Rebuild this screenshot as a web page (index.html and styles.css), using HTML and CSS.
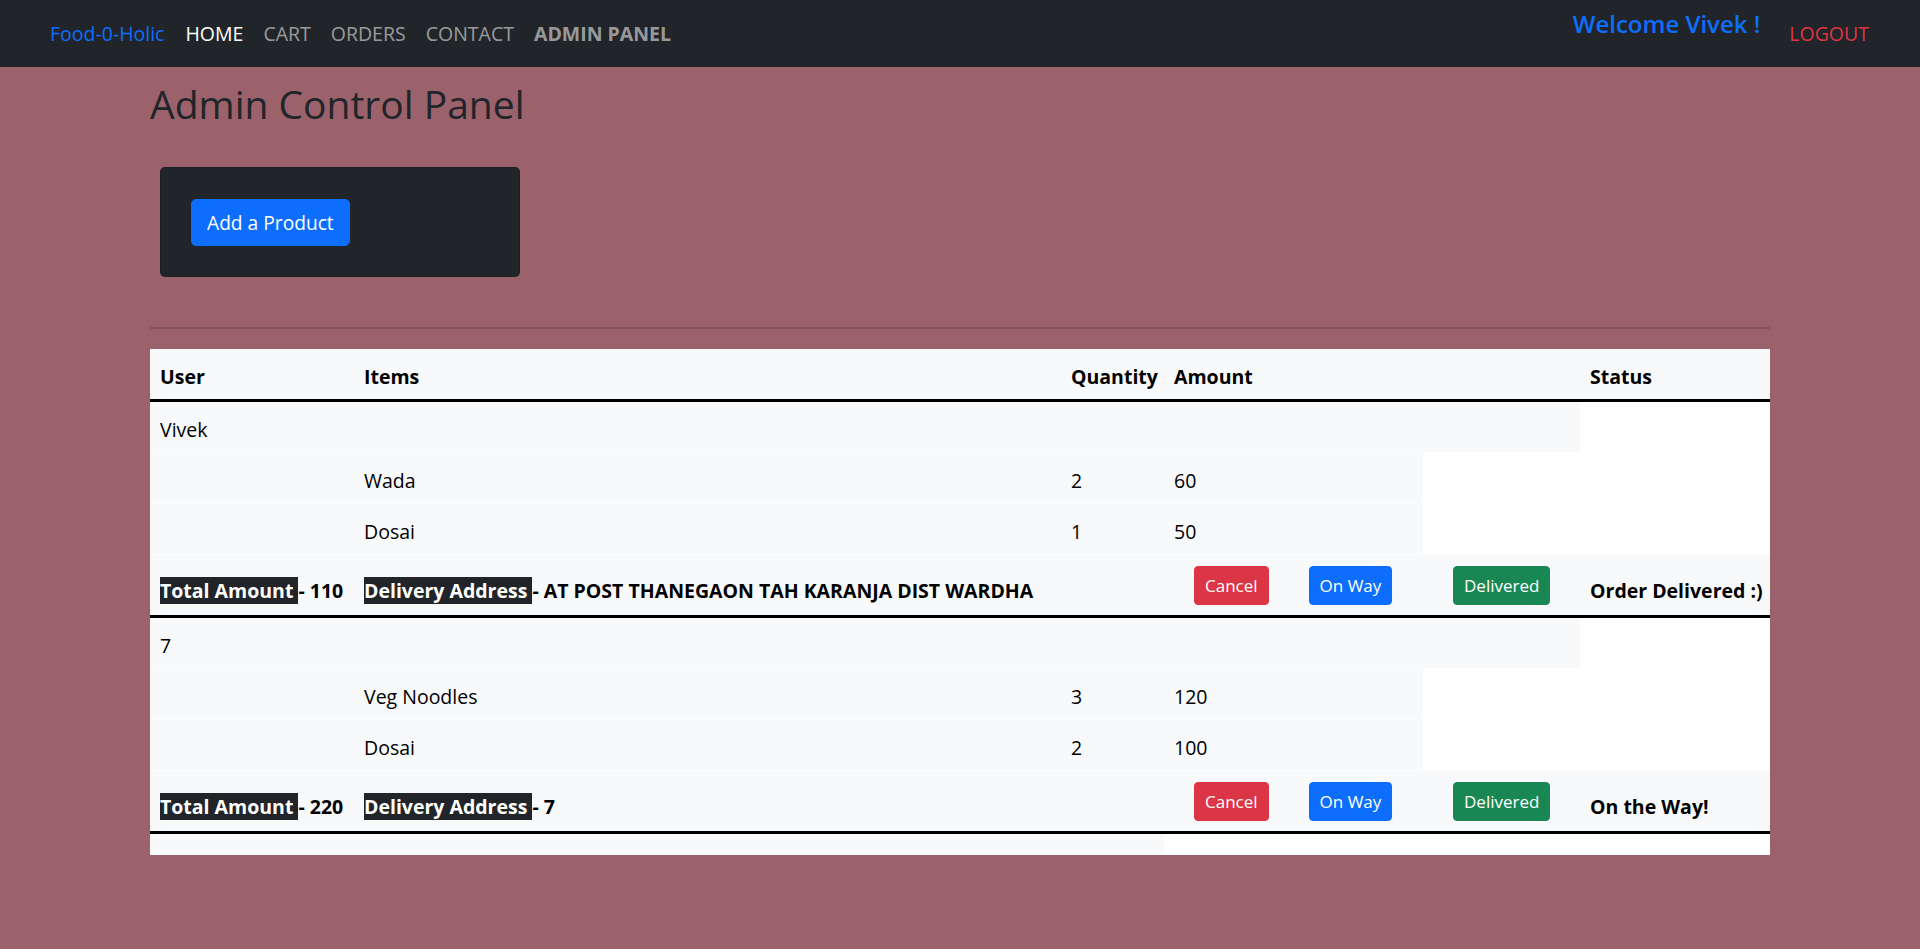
FILE: index.html
```html
<!DOCTYPE html>
<html lang="en">
  <head>
    <meta charset="UTF-8" />
    <meta name="viewport" content="width=device-width, initial-scale=1.0" />
    <title>Food-0-Holic | Admin Panel</title>
    <link rel="stylesheet" href="styles.css">
  </head>
  <body>
    <nav class="navbar">
      <a class="brand" href="#">Food-0-Holic</a>
      <ul class="nav-links">
        <li><a class="nav-link active" href="#">HOME</a></li>
        <li><a class="nav-link" href="#">CART</a></li>
        <li><a class="nav-link" href="#">ORDERS</a></li>
        <li><a class="nav-link" href="#">CONTACT</a></li>
        <li><a class="nav-link admin" href="#">ADMIN PANEL</a></li>
      </ul>
      <div class="nav-user">
        <h5 class="welcome">Welcome Vivek !</h5>
        <a class="logout" href="#">LOGOUT</a>
      </div>
    </nav>

    <main class="page">
      <div class="container">
        <h2 class="title">Admin Control Panel</h2>

        <div class="control-box">
          <button type="button" class="btn btn-primary btn-add">Add a Product</button>
        </div>

        <hr class="divider" />

        <table class="orders">
          <colgroup>
            <col class="col-user" />
            <col class="col-items" />
            <col class="col-qty" />
            <col class="col-amount" />
            <col class="col-extra" />
            <col class="col-status" />
          </colgroup>
          <thead>
            <tr>
              <th>User</th>
              <th>Items</th>
              <th>Quantity</th>
              <th>Amount</th>
              <th></th>
              <th>Status</th>
            </tr>
          </thead>
          <tbody>
            <tr>
              <td>Vivek</td>
              <td></td>
              <td></td>
              <td></td>
              <td></td>
            </tr>
            <tr>
              <td></td>
              <td>Wada</td>
              <td>2</td>
              <td>60</td>
            </tr>
            <tr>
              <td></td>
              <td>Dosai</td>
              <td>1</td>
              <td>50</td>
            </tr>
            <tr class="order-total">
              <td class="total-text"><span class="tag">Total Amount </span>- 110</td>
              <td class="total-text"><span class="tag">Delivery Address </span>- AT POST THANEGAON TAH KARANJA DIST WARDHA</td>
              <td></td>
              <td>
                <button type="button" class="btn btn-sm btn-danger">Cancel</button><button type="button" class="btn btn-sm btn-primary">On Way</button>
              </td>
              <td><button type="button" class="btn btn-sm btn-success">Delivered</button></td>
              <td class="total-text">Order Delivered :)</td>
            </tr>
          </tbody>
          <tbody>
            <tr>
              <td>7</td>
              <td></td>
              <td></td>
              <td></td>
              <td></td>
            </tr>
            <tr>
              <td></td>
              <td>Veg Noodles</td>
              <td>3</td>
              <td>120</td>
            </tr>
            <tr>
              <td></td>
              <td>Dosai</td>
              <td>2</td>
              <td>100</td>
            </tr>
            <tr class="order-total">
              <td class="total-text"><span class="tag">Total Amount </span>- 220</td>
              <td class="total-text"><span class="tag">Delivery Address </span>- 7</td>
              <td></td>
              <td>
                <button type="button" class="btn btn-sm btn-danger">Cancel</button><button type="button" class="btn btn-sm btn-primary">On Way</button>
              </td>
              <td><button type="button" class="btn btn-sm btn-success">Delivered</button></td>
              <td class="total-text">On the Way!</td>
            </tr>
          </tbody>
          <tbody>
            <tr class="empty-row">
              <td></td>
              <td></td>
              <td></td>
            </tr>
          </tbody>
        </table>
      </div>
    </main>

    <footer class="site-footer"></footer>
  </body>
</html>
```

FILE: styles.css
```css
body {
  margin: 0;
  font-family: "Open Sans", "Noto Sans", sans-serif;
  font-size: 19.5px;
  line-height: 30px;
  color: #212529;
  background-color: #9b626b;
}
a {
  text-decoration: none;
}

/* navbar */
.navbar {
  display: flex;
  align-items: center;
  height: 67px;
  padding: 0 51px 0 50px;
  background-color: #212529;
}
.brand {
  color: #0d6efd;
  margin-right: 11px;
}
.nav-links {
  display: flex;
  list-style: none;
  margin: 0;
  padding: 0;
}
.nav-link {
  display: block;
  padding: 0 10px;
  color: rgba(255, 255, 255, 0.55);
}
.nav-link.active {
  color: #fff;
}
.nav-link.admin {
  font-weight: bold;
}
.nav-user {
  display: flex;
  align-items: center;
  margin-left: auto;
}
.welcome {
  margin: 0 29px 20px 0;
  font-size: 24px;
  line-height: 30px;
  font-weight: 600;
  color: #0d6efd;
}
.logout {
  color: #dc3545;
}

/* page */
.page {
  min-height: 880px;
}
.container {
  width: 1620px;
  margin: 0 auto;
}
.title {
  margin: 13px 0 0;
  font-size: 39px;
  line-height: 48px;
  font-weight: 500;
}
.control-box {
  box-sizing: border-box;
  width: 360px;
  margin: 39px 0 0 10px;
  padding: 31px 30px 30px;
  background-color: #212529;
  border: 1px solid rgba(0, 0, 0, 0.15);
  border-radius: 5px;
}
.divider {
  margin: 50px 0 20px;
  border: 0;
  border-top: 2px solid #80555c;
}

/* buttons */
.btn {
  display: inline-block;
  font-family: inherit;
  font-size: 19.2px;
  line-height: 30px;
  padding: 7.5px 15px;
  color: #fff;
  border: 1px solid transparent;
  border-radius: 5px;
  cursor: pointer;
}
.btn-sm {
  font-size: 17px;
  line-height: 27px;
  padding: 5px 10px;
  margin: 1px 20px 0;
  border-radius: 4px;
  vertical-align: top;
}
.btn-primary {
  background-color: #0d6efd;
  border-color: #0d6efd;
}
.btn-danger {
  background-color: #dc3545;
  border-color: #dc3545;
}
.btn-success {
  background-color: #198754;
  border-color: #198754;
}

/* orders table */
.orders {
  width: 1620px;
  table-layout: fixed;
  border-collapse: separate;
  border-spacing: 0;
  background-color: #fff;
  color: #000;
}
.col-user { width: 204px; }
.col-items { width: 707px; }
.col-qty { width: 103px; }
.col-amount { width: 259px; }
.col-extra { width: 157px; }
.col-status { width: 190px; }
.orders th,
.orders td {
  padding: 13px 10px 7px;
  text-align: left;
  vertical-align: top;
  background-color: #f8f9fa;
  white-space: nowrap;
}
.orders th {
  font-weight: bold;
  border-bottom: 3px solid #000;
}
.orders td {
  border-bottom: 1px solid #fdfdfe;
}
.orders .order-total td {
  height: 40px;
  padding-top: 10px;
  padding-bottom: 10px;
  border-bottom: 3px solid #000;
}
.orders .order-total .total-text {
  padding-top: 21px;
  padding-bottom: 9px;
  height: 30px;
  font-weight: bold;
}
.tag {
  background-color: #212529;
  color: #fff;
}
.orders .empty-row td {
  height: 0;
  padding: 10px;
}

.site-footer {
  height: 60px;
  background-color: #212529;
}
```
